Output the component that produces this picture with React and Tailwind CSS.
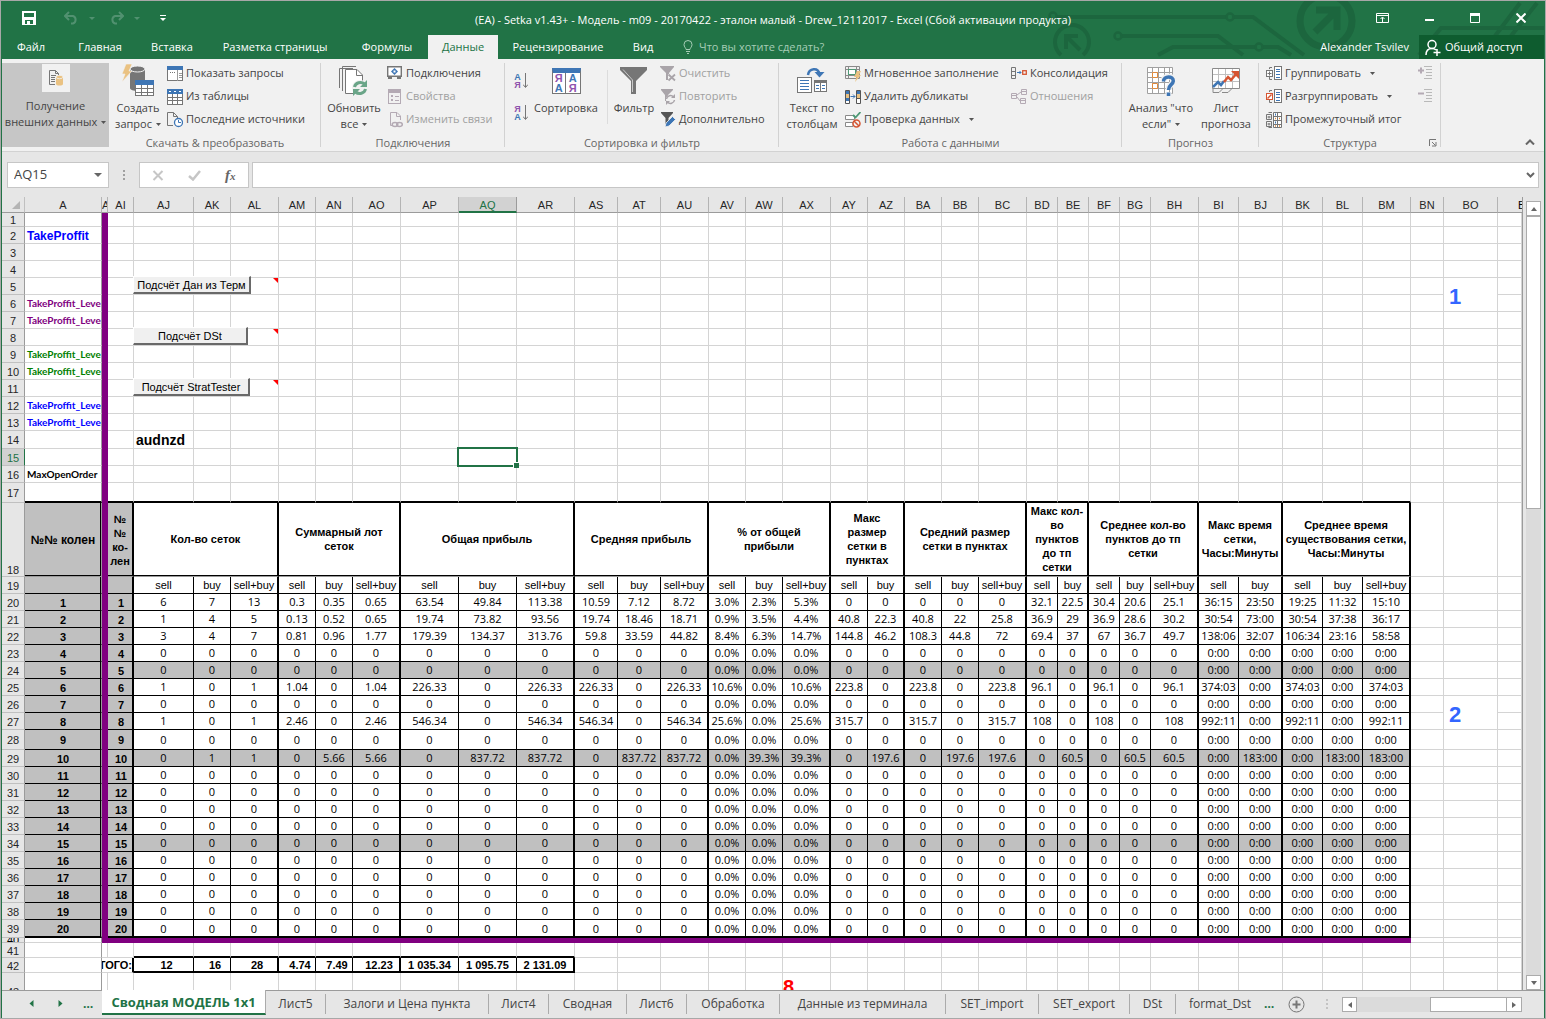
import React from "react";

/* ---------- sheet data ---------- */

const GROUPS = [
  { title: "Кол-во сеток", cols: [["AJ", 60], ["AK", 37], ["AL", 48]] },
  { title: "Суммарный лот\nсеток", cols: [["AM", 37], ["AN", 37], ["AO", 48]] },
  { title: "Общая прибыль", cols: [["AP", 58], ["AQ", 58], ["AR", 58]] },
  { title: "Средняя прибыль", cols: [["AS", 43], ["AT", 43], ["AU", 48]] },
  { title: "% от общей\nприбыли", cols: [["AV", 37], ["AW", 37], ["AX", 48]] },
  { title: "Макс\nразмер\nсетки в\nпунктах", cols: [["AY", 37], ["AZ", 37]] },
  { title: "Средний размер\nсетки в пунктах", cols: [["BA", 37], ["BB", 37], ["BC", 48]] },
  { title: "Макс кол-\nво\nпунктов\nдо тп\nсетки", cols: [["BD", 31], ["BE", 31]] },
  { title: "Среднее кол-во\nпунктов до тп\nсетки", cols: [["BF", 31], ["BG", 31], ["BH", 48]] },
  { title: "Макс время\nсетки,\nЧасы:Минуты", cols: [["BI", 40], ["BJ", 44]] },
  { title: "Среднее время\nсуществования сетки,\nЧасы:Минуты", cols: [["BK", 40], ["BL", 40], ["BM", 48]] },
];

const DATA_COLS = GROUPS.flatMap((g) =>
  g.cols.map(([name, width], i) => ({
    name,
    width,
    kind: ["sell", "buy", "sell+buy"][i],
    last: i === g.cols.length - 1,
  }))
);

const ZERO = [
  ..."000000000000".split(""),
  "0.0%", "0.0%", "0.0%",
  ..."0000000000".split(""),
  "0:00", "0:00", "0:00", "0:00", "0:00",
];

const VALUES = {
  1: "6 7 13 0.3 0.35 0.65 63.54 49.84 113.38 10.59 7.12 8.72 3.0% 2.3% 5.3% 0 0 0 0 0 32.1 22.5 30.4 20.6 25.1 36:15 23:50 19:25 11:32 15:10",
  2: "1 4 5 0.13 0.52 0.65 19.74 73.82 93.56 19.74 18.46 18.71 0.9% 3.5% 4.4% 40.8 22.3 40.8 22 25.8 36.9 29 36.9 28.6 30.2 30:54 73:00 30:54 37:38 36:17",
  3: "3 4 7 0.81 0.96 1.77 179.39 134.37 313.76 59.8 33.59 44.82 8.4% 6.3% 14.7% 144.8 46.2 108.3 44.8 72 69.4 37 67 36.7 49.7 138:06 32:07 106:34 23:16 58:58",
  6: "1 0 1 1.04 0 1.04 226.33 0 226.33 226.33 0 226.33 10.6% 0.0% 10.6% 223.8 0 223.8 0 223.8 96.1 0 96.1 0 96.1 374:03 0:00 374:03 0:00 374:03",
  8: "1 0 1 2.46 0 2.46 546.34 0 546.34 546.34 0 546.34 25.6% 0.0% 25.6% 315.7 0 315.7 0 315.7 108 0 108 0 108 992:11 0:00 992:11 0:00 992:11",
  10: "0 1 1 0 5.66 5.66 0 837.72 837.72 0 837.72 837.72 0.0% 39.3% 39.3% 0 197.6 0 197.6 197.6 0 60.5 0 60.5 60.5 0:00 183:00 0:00 183:00 183:00",
};

const TOTALS = ["12", "16", "28", "4.74", "7.49", "12.23", "1 035.34", "1 095.75", "2 131.09"];

const TOP_ROWS = [
  { n: 1, h: 14 },
  { n: 2, h: 17, label: "TakeProffit", tone: "pt-0.5 text-[#0000ff] text-xs leading-none" },
  { n: 3, h: 17 },
  { n: 4, h: 17 },
  { n: 5, h: 17, button: "Подсчёт Дан из Терм", size: "w-[118px]" },
  { n: 6, h: 17, label: "TakeProffit_Leve", tone: "text-[#800080] font-['Lato'] text-[10px]" },
  { n: 7, h: 17, label: "TakeProffit_Leve", tone: "text-[#800080] font-['Lato'] text-[10px]" },
  { n: 8, h: 17, button: "Подсчёт DSt", size: "w-[115px]" },
  { n: 9, h: 17, label: "TakeProffit_Leve", tone: "text-[#008000] font-['Lato'] text-[10px]" },
  { n: 10, h: 17, label: "TakeProffit_Leve", tone: "text-[#008000] font-['Lato'] text-[10px]" },
  { n: 11, h: 17, button: "Подсчёт StratTester", size: "w-[117px]" },
  { n: 12, h: 17, label: "TakeProffit_Leve", tone: "text-[#0000ff] font-['Lato'] text-[10px]" },
  { n: 13, h: 17, label: "TakeProffit_Leve", tone: "text-[#0000ff] font-['Lato'] text-[10px]" },
  { n: 14, h: 18 },
  { n: 15, h: 17 },
  { n: 16, h: 17, label: "MaxOpenOrder", tone: "text-black font-['Lato'] text-[10px]" },
  { n: 17, h: 20 },
];

const GRID = "border-r border-b border-[#d4d4d4]";

function RowHead({ n, tall }) {
  const active = n === 15;
  return (
    <th
      scope="row"
      className={
        "border-r border-b p-0 text-center text-[11px] font-normal " +
        (active
          ? "border-r-[#217346] border-b-[#c0c0c0] bg-[#d2d2d2] text-[#217346]"
          : "border-r-[#9b9b9b] border-b-[#c0c0c0] bg-[#e6e6e6] text-[#262626]") +
        (tall ? " align-bottom" : " pt-0.5 align-middle")
      }
    >
      {n}
    </th>
  );
}

function BigNumber({ value }) {
  return (
    <td rowSpan={2} className={GRID + " bg-white pl-[5px] align-bottom text-[22px] leading-7 font-bold text-[#3366ff]"}>
      {value}
    </td>
  );
}

function Trailing({ row }) {
  return (
    <>
      <td className={GRID} />
      {row === 5 && <BigNumber value="1" />}
      {row === 26 && <BigNumber value="2" />}
      {![5, 6, 26, 27].includes(row) && <td className={GRID} />}
      <td className={GRID} />
    </>
  );
}

function TopRow({ n, h, label, tone, button, size }) {
  const frame = n === 17;
  return (
    <tr style={{ height: h }}>
      <RowHead n={n} />
      <td
        className={
          "border-r border-r-[#9b9b9b] pl-0.5 font-bold whitespace-nowrap " +
          (frame ? "border-b-2 border-b-black " : "border-b border-b-[#d4d4d4] ") +
          (tone || "")
        }
      >
        {label}
      </td>
      <td className="bg-[#800080]" />
      <td className={frame ? "border-r border-b-2 border-r-[#d4d4d4] border-b-black" : GRID} />
      {DATA_COLS.map((c) => (
        <td
          key={c.name}
          className={
            "relative p-0 " +
            (frame ? "border-r border-b-2 border-r-[#d4d4d4] border-b-black" : GRID)
          }
        >
          {button && c.name === "AJ" && (
            <button
              type="button"
              className={
                "absolute bottom-0 -left-px z-10 h-[18px] border-t border-r-2 border-b-2 border-l border-t-white border-r-[#696969] border-b-[#696969] border-l-white bg-[#f0f0f0] pt-0.5 text-[11px] leading-none whitespace-nowrap text-black " +
                size
              }
            >
              {button}
            </button>
          )}
          {button && c.name === "AL" && (
            <svg className="absolute top-0 right-0 h-[5px] w-[5px]" viewBox="0 0 5 5">
              <path d="M0 0H5V5Z" fill="#ff0000" />
            </svg>
          )}
          {n === 14 && c.name === "AJ" && (
            <div className="pl-0.5 text-sm leading-none font-bold whitespace-nowrap">audnzd</div>
          )}
          {n === 15 && c.name === "AQ" && (
            <div className="absolute -inset-0.5 z-10 border-2 border-[#217346]">
              <div className="absolute -right-[3px] -bottom-[3px] h-[6px] w-[6px] border-t border-l border-white bg-[#217346]" />
            </div>
          )}
        </td>
      ))}
      <Trailing row={n} />
    </tr>
  );
}

const GREY_A =
  "border-r border-b border-r-[#9b9b9b] border-b-black bg-[#c0c0c0] p-0 pt-0.5 text-center text-[11px] font-bold shadow-[inset_-1px_0_0_#000]";
const GREY_AI = "border-r-2 border-b border-black bg-[#c0c0c0] p-0 pt-0.5 pl-0.5 text-center text-[11px] font-bold";

function DataRow({ i }) {
  const row = i + 19;
  const values = VALUES[i] ? VALUES[i].split(" ") : ZERO;
  const end = i === 20 ? " border-b-2" : "";
  const shade = i % 5 === 0 && i < 20 ? " bg-[#c0c0c0]" : " bg-white";
  return (
    <tr style={{ height: row === 28 ? 20 : row === 39 ? 18 : 17 }}>
      <RowHead n={row} />
      <td className={GREY_A + end}>{i}</td>
      <td className="bg-[#800080]" />
      <td className={GREY_AI + end}>{i}</td>
      {DATA_COLS.map((c, k) => (
        <td
          key={c.name}
          className={
            "border-b border-black text-center font-['Open_Sans'] text-[11px] leading-none whitespace-nowrap " +
            (row === 28 || row === 39 ? "" : "pb-0.5 ") +
            (c.last ? "border-r-2" : "border-r") +
            end +
            shade
          }
        >
          {values[k]}
        </td>
      ))}
      <Trailing row={row} />
    </tr>
  );
}

function Sheet() {
  const heads = [["A", 77], ["A", 6], ["AI", 26], ...DATA_COLS.map((c) => [c.name, c.width]), ["BN", 33], ["BO", 54]];
  return (
    <div className="min-w-0 flex-1 overflow-hidden border-r border-[#9b9b9b] bg-white font-['Liberation_Sans',sans-serif] text-black">
      <table className="w-full table-fixed border-separate border-spacing-0 leading-none">
        <colgroup>
          <col style={{ width: 23 }} />
          {heads.map(([name, w], k) => (
            <col key={name + k} style={{ width: w }} />
          ))}
          <col />
        </colgroup>
        <thead>
          <tr className="h-4">
            <td className="border-r border-b border-r-[#c0c0c0] border-b-[#9b9b9b] bg-[#e6e6e6] p-0">
              <svg className="mr-1 ml-auto h-[8px] w-[8px]" viewBox="0 0 8 8">
                <path d="M8 0V8H0Z" fill="#b4b4b4" />
              </svg>
            </td>
            {heads.map(([name], k) => (
              <th
                key={name + k}
                scope="col"
                className={
                  "overflow-hidden p-0 pt-0.5 text-center text-[11px] font-normal " +
                  (name === "AQ"
                    ? "border-r border-b-2 border-r-[#9b9b9b] border-b-[#217346] bg-[#d2d2d2] text-[#217346]"
                    : "border-r border-b border-r-[#b4b4b4] border-b-[#9b9b9b] bg-[#e6e6e6] text-[#262626]")
                }
              >
                {name}
              </th>
            ))}
            <th scope="col" className="border-b border-[#9b9b9b] bg-[#e6e6e6] p-0 pt-0.5 text-[11px] font-normal">
              <div className="ml-5 overflow-hidden text-left">B</div>
            </th>
          </tr>
        </thead>
        <tbody>
          {TOP_ROWS.map((r) => (
            <TopRow key={r.n} {...r} />
          ))}
          <tr className="h-[74px]">
            <RowHead n={18} tall />
            <td className="border-r border-b border-[#9b9b9b] bg-[#c0c0c0] p-0 text-center text-xs leading-none font-bold shadow-[inset_-1px_-1px_0_#000]">
              №№ колен
            </td>
            <td className="bg-[#800080]" />
            <td className="border-r-2 border-b border-r-black border-b-[#9b9b9b] bg-[#c0c0c0] p-0 text-center text-[11px] leading-[14px] font-bold shadow-[inset_0_-1px_0_#000]">
              №<br />№<br />ко-<br />лен
            </td>
            {GROUPS.map((g) => (
              <th
                key={g.title}
                scope="colgroup"
                colSpan={g.cols.length}
                className="border-r-2 border-b border-r-black border-b-[#9b9b9b] p-0 pb-0.5 text-center text-[11px] leading-[14px] font-bold whitespace-pre shadow-[inset_0_-1px_0_#000]"
              >
                {g.title}
              </th>
            ))}
            <Trailing row={18} />
          </tr>
          <tr className="h-[17px]">
            <RowHead n={19} />
            <td className={GREY_A} />
            <td className="bg-[#800080]" />
            <td className={GREY_AI} />
            {DATA_COLS.map((c) => (
              <td
                key={c.name}
                className={
                  "border-b border-black p-0 text-center text-[11px] whitespace-nowrap " +
                  (c.last ? "border-r-2" : "border-r")
                }
              >
                {c.kind}
              </td>
            ))}
            <Trailing row={19} />
          </tr>
          {Array.from({ length: 20 }, (_, k) => (
            <DataRow key={k} i={k + 1} />
          ))}
          <tr className="h-[5px]">
            <th scope="row" className="border-r border-b border-r-[#9b9b9b] border-b-[#c0c0c0] bg-[#e6e6e6] p-0 text-[11px] font-normal">
              <div className="flex h-1 items-center justify-center overflow-hidden">40</div>
            </th>
            <td className="border-r border-b border-r-[#9b9b9b] border-b-[#d4d4d4] p-0" />
            <td colSpan={32} className="bg-[#800080] p-0" />
            <td className={GRID + " p-0"} />
            <td className={GRID + " p-0"} />
            <td className={GRID + " p-0"} />
          </tr>
          <tr className="h-[15px]">
            <RowHead n={41} />
            <td className="border-r border-b border-r-[#9b9b9b] border-b-[#d4d4d4] p-0" />
            <td className={GRID + " p-0"} />
            <td className={GRID + " p-0"} />
            {DATA_COLS.map((c, k) => (
              <td
                key={c.name}
                className={k < 9 ? "border-r border-b-2 border-r-[#d4d4d4] border-b-black p-0" : GRID + " p-0"}
              />
            ))}
            <Trailing row={41} />
          </tr>
          <tr className="h-[15px]">
            <RowHead n={42} />
            <td className="border-r border-b border-r-[#9b9b9b] border-b-[#d4d4d4] p-0" />
            <td colSpan={2} className="border-r-2 border-b border-r-black border-b-[#d4d4d4] p-0">
              <div className="flex justify-end overflow-hidden text-[11px] font-bold">
                <span>ИТОГО:</span>
              </div>
            </td>
            {DATA_COLS.map((c, k) => (
              <td
                key={c.name}
                className={
                  "p-0 pt-0.5 text-center text-[11px] font-bold whitespace-nowrap " +
                  (k < 6 ? "pl-1.5 " : "") +
                  (k < 9 ? "border-b-2 border-black " + (c.last ? "border-r-2" : "border-r") : GRID)
                }
              >
                {TOTALS[k]}
              </td>
            ))}
            <Trailing row={42} />
          </tr>
          <tr className="h-10">
            <th scope="row" className="border-r border-[#9b9b9b] bg-[#e6e6e6] p-0 pt-3.5 align-top text-[11px] font-normal text-[#262626]">
              43
            </th>
            <td className="border-r border-r-[#9b9b9b] p-0" />
            <td className={GRID + " p-0"} />
            <td className={GRID + " p-0"} />
            {DATA_COLS.map((c) => (
              <td key={c.name} className={GRID + " p-0 align-top"}>
                {c.name === "AX" && (
                  <div className="pt-1 text-[20px] leading-5 font-bold text-[#ff0000]">8</div>
                )}
              </td>
            ))}
            <Trailing row={43} />
          </tr>
        </tbody>
      </table>
    </div>
  );
}

/* ---------- icons ---------- */

function Ico({ w = 16, h = 16, children, className = "" }) {
  return (
    <svg width={w} height={h} viewBox={`0 0 ${w} ${h}`} fill="none" className={"shrink-0 " + className} aria-hidden="true">
      {children}
    </svg>
  );
}

const Caret = ({ className = "" }) => (
  <svg width="5" height="3" viewBox="0 0 5 3" className={"inline-block shrink-0 " + className} aria-hidden="true">
    <path d="M0 0H5L2.500 3Z" fill="#555" />
  </svg>
);

const GetData = () => (
  <span className="flex h-7 w-7 items-center justify-center bg-[#f1f1f1]">
    <Ico>
      <path d="M1.500 .5H7.500L10.500 3.500V6M1.500 .5V14.500H7" stroke="#767676" fill="none" />
      <path d="M7.500 .5V3.500H10.500M3 5.500H8M3 7.500H7M3 9.500H7M3 11.500H7" stroke="#767676" />
      <path d="M8 7V14C8 16 15 16 15 14V7Z" fill="#eac282" />
      <ellipse cx="11.500" cy="7" rx="3.500" ry="1.700" fill="#eac282" stroke="#f1f1f1" strokeWidth=".8" />
    </Ico>
  </span>
);

const NewQuery = () => (
  <Ico w={34} h={34}>
    <path d="M9 4V24C9 28 24 28 24 24V4Z" fill="#767676" />
    <ellipse cx="16.500" cy="5" rx="7.500" ry="3" fill="#767676" stroke="#f1f1f1" />
    <path d="M5 0H11L8 7H11L1 18L4 10H1Z" fill="#eac282" stroke="#f1f1f1" strokeWidth=".6" />
    <rect x="14.500" y="17.500" width="18" height="14" fill="#fff" stroke="#767676" />
    <path d="M14 16H33V21H14Z" fill="#3e76b5" />
    <path d="M15 24.500H32M15 28.500H32M20.500 21V31M26.500 21V31" stroke="#767676" />
  </Ico>
);

const ShowQueries = () => (
  <Ico>
    <rect x=".5" y=".5" width="15" height="14" fill="#fff" stroke="#767676" />
    <path d="M0 0H16V4H0Z" fill="#3e76b5" />
    <path d="M3 6.500H9" stroke="#767676" strokeDasharray="1 1" />
    <path d="M10.500 4V15M12 7.500H15M12 9.500H15M12 11.500H15" stroke="#9a9a9a" />
  </Ico>
);

const FromTable = () => (
  <Ico>
    <rect x=".5" y="1.500" width="15" height="14" fill="#fff" stroke="#767676" />
    <path d="M0 0H16V5H0Z" fill="#3e76b5" />
    <path d="M2 2.500H4M7 2.500H9M12 2.500H14" stroke="#fff" />
    <path d="M1 8.500H15M1 11.500H15M5.500 5V15M10.500 5V15" stroke="#767676" />
  </Ico>
);

const Recent = () => (
  <Ico>
    <path d="M.5 .5H6.500L10.500 4.500V6M.5 .5V13.500H6M6.500 .5V4.500H10.500" stroke="#767676" />
    <circle cx="11.500" cy="10.500" r="4" fill="#fff" stroke="#3e76b5" strokeWidth="1.300" />
    <path d="M11.500 8V10.500H14" stroke="#3e76b5" />
  </Ico>
);

const Refresh = () => (
  <Ico w={32} h={32}>
    <path d="M15 2.500H1.500V22M18 .5H4.500V25" stroke="#767676" transform="translate(0 1)" />
    <path d="M7.500 4.500H19L24.500 10V28.500H7.500Z" fill="#fff" stroke="#767676" />
    <path d="M18.500 4.500V10.500H24.500" stroke="#767676" />
    <circle cx="22" cy="23" r="8" fill="#f1f1f1" />
    <path d="M16.500 22A6 5.500 0 0 1 26.500 19M27.500 24A6 5.500 0 0 1 17.500 27" stroke="#6aa588" strokeWidth="3" />
    <path d="M29 15V22H22ZM15 31V24H22Z" fill="#6aa588" />
  </Ico>
);

const Connections = () => (
  <Ico>
    <path d="M.7 .7H14.300V10.300H.7Z" fill="#fff" stroke="#767676" strokeWidth="1.400" />
    <path d="M7.500 2L11 5.500L7.500 9L4 5.500Z" fill="#3e76b5" />
    <path d="M6.500 5.500H8.500" stroke="#fff" strokeWidth="2" />
    <path d="M1 12H5M10 12H14" stroke="#767676" strokeWidth="2" />
  </Ico>
);

const Properties = () => (
  <Ico>
    <rect x="1.500" y=".5" width="12" height="14" stroke="#b4aab4" />
    <path d="M1 0H14V4H1Z" fill="#b4aab4" />
    <path d="M4 6H6V8H4ZM4 10H6V12H4Z" fill="#b4aab4" />
    <path d="M8 7.500H12M8 11.500H12" stroke="#b4aab4" />
  </Ico>
);

const EditLinks = () => (
  <Ico>
    <path d="M3.500 .5H10L13.500 4V8M3.500 .5V13.500H5M9.500 .5V4.500H13.500" stroke="#b4aab4" />
    <ellipse cx="8" cy="12.500" rx="2.800" ry="2" stroke="#b4aab4" strokeWidth="1.500" />
    <ellipse cx="12.500" cy="12.500" rx="2.800" ry="2" stroke="#b4aab4" strokeWidth="1.500" />
  </Ico>
);

const SortAz = ({ down }) => (
  <span className="flex h-[18px] items-center gap-0.5 font-['Liberation_Sans'] text-[9px] leading-[8px] font-bold">
    <span className="flex flex-col">
      <span className={down ? "text-[#3e76b5]" : "text-[#8f53ad]"}>{down ? "А" : "Я"}</span>
      <span className={down ? "text-[#8f53ad]" : "text-[#3e76b5]"}>{down ? "Я" : "А"}</span>
    </span>
    <Ico w={5} h={16}>
      <path d="M2.500 0V14M0 11.500L2.500 14.500L5 11.500" stroke="#767676" />
    </Ico>
  </span>
);

const SortBig = () => (
  <span className="grid h-[26px] w-[29px] grid-cols-2 border border-t-[5px] border-[#767676] border-t-[#3e76b5] bg-white text-center font-['Liberation_Sans'] text-[11px] leading-[10px] font-bold">
    <span className="flex flex-col justify-center border-r border-[#767676]">
      <span className="text-[#8f53ad]">Я</span>
      <span className="text-[#3e76b5]">А</span>
    </span>
    <span className="flex flex-col justify-center">
      <span className="text-[#3e76b5]">А</span>
      <span className="text-[#8f53ad]">Я</span>
    </span>
  </span>
);

const FilterBig = () => (
  <Ico w={28} h={28}>
    <path d="M0 0H27V3L16 14V27H11V14L0 3Z" fill="#767676" />
    <path d="M3 2.500L12.500 13V25" stroke="#c8c8c8" />
  </Ico>
);

const ClearFilter = () => (
  <Ico>
    <path d="M0 0H14V1L9 7V14H6V7L0 1Z" fill="#a9a4a9" />
    <rect x="8" y="8" width="8" height="8" fill="#f1f1f1" />
    <path d="M8.500 8.500L15 14.500M15 8.500L8.500 14.500" stroke="#a9a4a9" strokeWidth="1.800" />
  </Ico>
);

const Reapply = () => (
  <Ico>
    <path d="M1 0H13V1L8 6V12H5V6L1 1Z" fill="#a9a4a9" />
    <circle cx="11" cy="10.500" r="5" fill="#f1f1f1" />
    <path d="M6.500 10A4 4 0 0 1 13.500 8M14.500 11A4 4 0 0 1 7.500 13" stroke="#a9a4a9" strokeWidth="1.500" />
    <path d="M15 5V9H11ZM6 16V12H10Z" fill="#a9a4a9" />
  </Ico>
);

const Advanced = () => (
  <Ico>
    <path d="M1 0H13V1L8.500 6V12H5.500V6L1 1Z" fill="#555" />
    <path d="M5 15L6 11L12.500 4.500L15.500 7.500L9 14Z" fill="#3e76b5" stroke="#f1f1f1" strokeWidth=".8" />
  </Ico>
);

const TextToCols = () => (
  <Ico w={32} h={30}>
    <path d="M12 9C13 2 22 1 23.500 8" stroke="#3e76b5" strokeWidth="2.500" />
    <path d="M18.500 6H28.500L23.500 11.500Z" fill="#3e76b5" />
    <rect x="1.500" y="11.500" width="14" height="15" fill="#fff" stroke="#767676" />
    <path d="M4 14.500H13M4 17.500H13M4 20.500H13M4 23.500H13" stroke="#3e76b5" />
    <rect x="18.500" y="14.500" width="12" height="11" fill="#fff" stroke="#767676" />
    <path d="M18 14H31V17H18ZM24 17H25V26H24Z" fill="#767676" />
    <path d="M20 19.500H23M26 19.500H29M20 22.500H23M26 22.500H29" stroke="#3e76b5" />
  </Ico>
);

const FlashFill = () => (
  <Ico>
    <path d="M.5 .5H14.500V12.500H.5ZM.5 3.500H14M.5 9.500H14M3.500 .5V12M11.500 .5V12" stroke="#8a8a8a" />
    <rect x="3.500" y="3.500" width="7" height="5" fill="#fff" stroke="#4f9a76" />
    <path d="M12 5H16L14 9H16L10 16L11.500 11H9Z" fill="#eac282" />
  </Ico>
);

const RemoveDup = () => (
  <Ico>
    <path d="M.5 1.500H4.500V14.500H.5ZM11.500 1.500H15.500V14.500H11.500Z" fill="#fff" stroke="#555" />
    <path d="M1 2H4V5H1ZM1 9H4V12H1ZM12 2H15V5H12Z" fill="#3e76b5" />
    <path d="M1 5H4V9H1ZM12 5H15V9H12Z" fill="#eac282" />
    <path d="M5.500 7.500H10M8 5.500L10 7.500L8 9.500" stroke="#3e76b5" />
    <path d="M12 9.500H15" stroke="#555" />
  </Ico>
);

const Validate = () => (
  <Ico>
    <path d="M.5 3.500H9.500V7.500H.5ZM.5 10.500H8V14.500H.5Z" fill="#fff" stroke="#8a8a8a" />
    <path d="M8 3L10.500 5.500L15.500 0" stroke="#4f9a76" strokeWidth="1.800" />
    <circle cx="11.500" cy="11.500" r="3.500" fill="#f1f1f1" stroke="#d65532" strokeWidth="1.500" />
    <path d="M9 9L14 14" stroke="#d65532" strokeWidth="1.500" />
  </Ico>
);

const Consolidate = () => (
  <Ico>
    <path d="M.5 1.500H4.500V12.500H.5ZM.5 5.500H4.500M.5 9.500H4.500" stroke="#767676" />
    <path d="M6 6.500H10M8.500 5L10 6.500L8.500 8" stroke="#3e76b5" />
    <rect x="11.700" y="4.700" width="3.600" height="3.600" stroke="#d65532" strokeWidth="1.300" />
  </Ico>
);

const Relations = () => (
  <Ico>
    <path d="M.5 4.500H5.500V9.500H.5ZM10.500 .5H15.500V5.500H10.500ZM9.500 9.500H14.500V14.500H9.500Z" stroke="#b4aab4" />
    <path d="M6 6L10 3M6 8L9 12M10 2.500H16M9 11.500H15M0 6.500H5" stroke="#b4aab4" />
  </Ico>
);

const WhatIf = () => (
  <Ico w={30} h={32}>
    <path d="M1.500 2.500H26.500V28.500H1.500ZM6.500 2V28M12.500 2V28M18.500 2V28M23.500 2V28M1 7.500H26M1 12.500H26M1 17.500H26M1 23.500H26" stroke="#a0a0a0" fill="#fff" />
    <path d="M6.500 7.500H11.500V12.500H6.500ZM6.500 18.500H11.500V23.500H6.500Z" fill="#fff" stroke="#e08a3c" />
    <path d="M17.500 16C17.500 10 28 10 27.500 16C27 20 22.500 19.500 22.500 25M22.500 27V31" stroke="#f1f1f1" strokeWidth="6" />
    <path d="M17.500 16.500C17.500 10.500 27.500 10.500 27.300 16C27 20 22.500 19.500 22.500 25M22.500 27.500V31" stroke="#3e76b5" strokeWidth="3.500" />
  </Ico>
);

const Forecast = () => (
  <Ico w={30} h={32}>
    <path d="M1.500 3.500H28.500V23.500H1.500Z" fill="#fff" stroke="#8a8a8a" />
    <path d="M7.500 4V23M14.500 4V23M21.500 4V23M2 9.500H28M2 16.500H28" stroke="#c0c0c0" />
    <path d="M2 23.500V27.500H8L12 23.500M11 27.500H17L21 23.500" stroke="#8a8a8a" />
    <path d="M2 22L7 17L10 20L13 16" stroke="#3e76b5" strokeWidth="2.500" />
    <path d="M13 17L17 12L20 15L26 8" stroke="#d65532" strokeWidth="2.500" />
    <path d="M20 6H28V14Z" fill="#d65532" />
  </Ico>
);

const GroupIco = ({ un }) => (
  <Ico>
    <path d="M6 1.500H3.500V3M6 13.500H3.500V11" stroke="#767676" />
    <rect x=".5" y="4.500" width="6" height="6" fill="#fff" stroke={un ? "#d65532" : "#767676"} />
    {un ? (
      <path d="M1.500 9.500L5.500 5.500" stroke="#d65532" strokeWidth="1.500" />
    ) : (
      <path d="M3.500 5.500V9.500M1.500 7.500H5.500" stroke="#767676" />
    )}
    <rect x="8.500" y=".5" width="7" height="13" fill="#fff" stroke="#767676" />
    <path d="M10 3.500H14M10 5.500H14M10 8.500H14M10 11.500H14" stroke="#3e76b5" />
  </Ico>
);

const Subtotal = () => (
  <Ico>
    <path d="M6 .5H2.500M6 15.500H2.500" stroke="#767676" />
    <path d="M.5 2.500H5.500V7.500H.5ZM.5 9.500H5.500V14.500H.5ZM3 4V6.500M1.500 5H4.500M3 11V13.500M1.500 12H4.500" stroke="#767676" />
    <path d="M7.500 .5H15.500V15.500H7.500ZM11.500 .5V15M7.500 4.500H15M7.500 8.500H15M7.500 12.500H15" fill="#fff" stroke="#767676" />
    <path d="M9 2.500H10M9 10.500H10" stroke="#3e76b5" strokeWidth="2" />
    <path d="M9 6.500H10M13 6.500H14M9 14H10M13 14H14" stroke="#e08a3c" strokeWidth="1.500" />
  </Ico>
);

const Detail = ({ plus }) => (
  <Ico>
    <path d={plus ? "M0 4.500H6M3 1.500V7.500" : "M0 4.500H6"} stroke="#b4aab4" strokeWidth="2" />
    <path d="M6 .5H14M8 3.500H14M8 6.500H14M8 9.500H14M6 12.500H14" stroke="#b9b9b9" />
  </Ico>
);

/* ---------- title bar ---------- */

const HeaderArt = () => (
  <svg className="pointer-events-none absolute top-0 right-0 h-[58px] w-[543px]" viewBox="0 0 543 58" fill="none" aria-hidden="true">
    <g stroke="#1c663e">
      <g strokeWidth="4">
        <path d="M55 16H226M233 16H252L303 54" />
        <path d="M121 35H217L242 54" />
        <path d="M157 54L172 46H254M262 46H277L290 54" />
        <path d="M418 54L440 27H543" />
        <path d="M494 35L519 2M510 35L536 2" />
      </g>
      <g strokeWidth="2.500" fill="#217346">
        <circle cx="52" cy="15" r="3.500" />
        <circle cx="117" cy="35" r="3.500" />
        <circle cx="229" cy="16" r="3.500" />
        <circle cx="258" cy="46" r="3.500" />
      </g>
      <path d="M60 54A17 17 0 1 1 82 54" strokeWidth="4" />
      <path d="M65 48V35H77M66 36L79 49" strokeWidth="4" />
      <circle cx="325" cy="20" r="26" strokeWidth="7" fill="#217346" />
      <path d="M315 9H336V29M335 10L314 31" strokeWidth="7" />
    </g>
  </svg>
);

const TABS = [
  ["Файл", "w-[58px]"],
  ["Главная", "w-[80px]"],
  ["Вставка", "w-[64px]"],
  ["Разметка страницы", "w-[142px]"],
  ["Формулы", "w-[82px]"],
  ["Данные", "w-[70px]"],
  ["Рецензирование", "w-[120px]"],
  ["Вид", "w-[50px]"],
];

function Header() {
  return (
    <header className="relative flex h-[58px] shrink-0 flex-col overflow-hidden bg-[#217346] text-[11px] text-white">
      <HeaderArt />
      <div className="relative flex h-[34px] items-center">
        <div className="flex w-[190px] items-center pl-5">
          <button type="button" aria-label="Сохранить">
            <Ico w={14} h={14}>
              <path d="M0 0H14V14H0Z" fill="#fff" />
              <path d="M2 2H12V6H2ZM3 9H11V13H3Z" fill="#217346" />
              <path d="M5 10H8V14H5Z" fill="#fff" />
            </Ico>
          </button>
          <button type="button" aria-label="Отменить" className="ml-7 flex items-center gap-2.5">
            <Ico w={15} h={14}>
              <path d="M1 5H9A4 4 0 0 1 9 12.500H7M5 1L1 5L5 9" stroke="#519170" strokeWidth="2" />
            </Ico>
            <svg width="6" height="3"><path d="M0 0H6L3 3Z" fill="#519170" /></svg>
          </button>
          <button type="button" aria-label="Вернуть" className="ml-3.5 flex items-center gap-2.5">
            <Ico w={15} h={14}>
              <path d="M14 5H6A4 4 0 0 0 6 12.500H8M10 1L14 5L10 9" stroke="#519170" strokeWidth="2" />
            </Ico>
            <svg width="6" height="3"><path d="M0 0H6L3 3Z" fill="#519170" /></svg>
          </button>
          <button type="button" aria-label="Настройка панели" className="ml-5">
            <Ico w={6} h={6}>
              <path d="M0 .5H6" stroke="#fff" />
              <path d="M0 3H6L3 6Z" fill="#fff" />
            </Ico>
          </button>
        </div>
        <h1 className="flex-1 pt-1 text-center whitespace-nowrap">
          (EA) - Setka v1.43+ - Модель - m09 - 20170422 - эталон малый - Drew_12112017 - Excel (Сбой активации продукта)
        </h1>
        <div className="flex w-[190px] items-center justify-end gap-9 pr-[18px]">
          <button type="button" aria-label="Параметры ленты">
            <Ico w={13} h={10}>
              <path d="M.5 .5H12.500V9.500H.5ZM.5 2.500H12.500M6.500 9V4.500M4.500 6L6.500 4L8.500 6" stroke="#fff" />
            </Ico>
          </button>
          <button type="button" aria-label="Свернуть">
            <Ico w={9} h={10}><path d="M0 7H9" stroke="#fff" strokeWidth="2" /></Ico>
          </button>
          <button type="button" aria-label="Развернуть">
            <Ico w={10} h={10}>
              <path d="M.5 .5H9.500V9.500H.5Z" stroke="#fff" />
              <path d="M0 1.500H10" stroke="#fff" strokeWidth="3" />
            </Ico>
          </button>
          <button type="button" aria-label="Закрыть">
            <Ico w={10} h={10}><path d="M.5 .5L9.500 9.500M9.500 .5L.5 9.500" stroke="#fff" strokeWidth="2" /></Ico>
          </button>
        </div>
      </div>
      <div className="relative flex h-6 items-stretch">
        <nav className="flex">
          {TABS.map(([t, w]) => (
            <button
              key={t}
              type="button"
              className={
                w + " text-center whitespace-nowrap " + (t === "Данные" ? "bg-[#f1f1f1] text-[#217346]" : "text-white")
              }
            >
              {t}
            </button>
          ))}
        </nav>
        <label className="ml-[15px] flex items-center gap-1.5 text-[#a6cdb6]">
          <Ico w={10} h={14}>
            <path d="M3 9.500C3 8 1 7 1 4.500A4 4 0 0 1 9 4.500C9 7 7 8 7 9.500ZM3 11.500H7M4 13.500H6" stroke="#a6cdb6" />
          </Ico>
          <input
            type="text"
            aria-label="Помощник"
            placeholder="Что вы хотите сделать?"
            className="w-40 bg-transparent outline-none placeholder:text-[#a6cdb6]"
          />
        </label>
        <div className="flex-1" />
        <div className="flex items-center pr-2.5 whitespace-nowrap">Alexander Tsvilev</div>
        <button type="button" className="flex w-[125px] items-center gap-1 bg-[#0e5c2f] pl-1.5 whitespace-nowrap">
          <Ico w={16} h={17}>
            <circle cx="7" cy="5.500" r="4" stroke="#fff" strokeWidth="1.500" />
            <path d="M1 16C1 11 4 9.500 7 9.500C9 9.500 10 10 11 11M12 10V17M8.500 13.500H15.500" stroke="#fff" strokeWidth="1.500" />
          </Ico>
          Общий доступ
        </button>
      </div>
    </header>
  );
}

/* ---------- ribbon ---------- */

function Big({ icon, lines, caret, width }) {
  return (
    <button type="button" className={"flex shrink-0 flex-col items-center text-center leading-4 whitespace-nowrap " + width}>
      <span className="flex h-[38px] items-center justify-center">{icon}</span>
      {lines.map((l, i) => (
        <span key={l} className="flex items-center gap-1">
          {l}
          {caret && i === lines.length - 1 && <Caret />}
        </span>
      ))}
    </button>
  );
}

function Small({ icon, text, off, caret }) {
  return (
    <button
      type="button"
      disabled={off}
      className={"flex h-[23px] items-center gap-[3px] whitespace-nowrap " + (off ? "text-[#a0a0a0]" : "text-[#444]")}
    >
      <span className="flex w-4">{icon}</span>
      {text}
      {caret && <Caret className="ml-1.5" />}
    </button>
  );
}

function Group({ label, width, children, launcher }) {
  return (
    <section className={"relative flex shrink-0 flex-col " + width}>
      <div className="flex h-[73px]">{children}</div>
      <div className="flex h-4 items-center justify-center text-[#666]">{label}</div>
      {launcher && (
        <button type="button" aria-label="Параметры структуры" className="absolute right-1 bottom-1 flex">
          <Ico w={8} h={8}>
            <path d="M.5 7V.5H7M3 3L6.500 6.500M7 3V7H3" stroke="#767676" />
          </Ico>
        </button>
      )}
      <div className="absolute top-px right-0 h-[84px] w-px bg-[#d2d2d2]" />
    </section>
  );
}

function Ribbon() {
  return (
    <div className="flex h-[93px] shrink-0 border-b border-[#d2d2d2] bg-[#f1f1f1] pt-[3px] text-[11px] text-[#444]">
      <button type="button" className="mt-px flex h-[84px] w-[107px] shrink-0 flex-col items-center bg-[#c6c6c6] pt-px leading-4">
        <GetData />
        <span className="mt-1.5">Получение</span>
        <span className="flex items-center gap-1 whitespace-nowrap">
          внешних данных <Caret />
        </span>
      </button>
      <Group label="Скачать & преобразовать" width="w-[212px]">
        <Big icon={<NewQuery />} lines={["Создать", "запрос"]} caret width="w-[58px]" />
        <div className="flex flex-col">
          <Small icon={<ShowQueries />} text="Показать запросы" />
          <Small icon={<FromTable />} text="Из таблицы" />
          <Small icon={<Recent />} text="Последние источники" />
        </div>
      </Group>
      <Group label="Подключения" width="w-[184px]">
        <Big icon={<Refresh />} lines={["Обновить", "все"]} caret width="w-[66px]" />
        <div className="flex flex-col">
          <Small icon={<Connections />} text="Подключения" />
          <Small icon={<Properties />} text="Свойства" off />
          <Small icon={<EditLinks />} text="Изменить связи" off />
        </div>
      </Group>
      <Group label="Сортировка и фильтр" width="w-[274px]">
        <div className="flex w-7 flex-col items-center gap-3.5 pt-2.5 pl-1">
          <button type="button" aria-label="Сортировка от А до Я"><SortAz down /></button>
          <button type="button" aria-label="Сортировка от Я до А"><SortAz /></button>
        </div>
        <Big icon={<SortBig />} lines={["Сортировка"]} width="w-[66px]" />
        <div className="mt-2 ml-2 h-[54px] w-px bg-[#dcdcdc]" />
        <Big icon={<FilterBig />} lines={["Фильтр"]} width="w-[52px]" />
        <div className="flex flex-col">
          <Small icon={<ClearFilter />} text="Очистить" off />
          <Small icon={<Reapply />} text="Повторить" off />
          <Small icon={<Advanced />} text="Дополнительно" />
        </div>
      </Group>
      <Group label="Работа с данными" width="w-[343px]">
        <Big icon={<TextToCols />} lines={["Текст по", "столбцам"]} width="w-[66px]" />
        <div className="flex w-[166px] flex-col">
          <Small icon={<FlashFill />} text="Мгновенное заполнение" />
          <Small icon={<RemoveDup />} text="Удалить дубликаты" />
          <Small icon={<Validate />} text="Проверка данных" caret />
        </div>
        <div className="flex flex-col">
          <Small icon={<Consolidate />} text="Консолидация" />
          <Small icon={<Relations />} text="Отношения" off />
        </div>
      </Group>
      <Group label="Прогноз" width="w-[137px]">
        <Big icon={<WhatIf />} lines={['Анализ "что', 'если"']} caret width="w-[78px]" />
        <Big icon={<Forecast />} lines={["Лист", "прогноза"]} width="w-[52px]" />
      </Group>
      <Group label="Структура" width="w-[182px]" launcher>
        <div className="flex w-[159px] flex-col pl-[7px]">
          <Small icon={<GroupIco />} text="Группировать" caret />
          <Small icon={<GroupIco un />} text="Разгруппировать" caret />
          <Small icon={<Subtotal />} text="Промежуточный итог" />
        </div>
        <div className="flex flex-col">
          <button type="button" disabled aria-label="Показать детали" className="flex h-[23px] items-center"><Detail plus /></button>
          <button type="button" disabled aria-label="Скрыть детали" className="flex h-[23px] items-center"><Detail /></button>
        </div>
      </Group>
      <button type="button" aria-label="Свернуть ленту" className="mt-auto mr-[9px] mb-1.5 ml-auto">
        <Ico w={10} h={6}><path d="M1 5.500L5 1.500L9 5.500" stroke="#666" strokeWidth="2" /></Ico>
      </button>
    </div>
  );
}

function FormulaBar() {
  return (
    <div className="flex h-[45px] shrink-0 items-start bg-[#e6e6e6] pt-2.5 pr-[5px] pl-[5px] text-[#444]">
      <div className="flex h-[26px] w-[102px] items-center border border-[#c6c6c6] bg-white pr-1.5">
        <input aria-label="Имя ячейки" defaultValue="AQ15" className="min-w-0 flex-1 bg-transparent pl-1.5 text-[13px] outline-none" />
        <button type="button" aria-label="Список имён">
          <Ico w={8} h={4}><path d="M0 0H8L4 4Z" fill="#666" /></Ico>
        </button>
      </div>
      <Ico w={30} h={26}>
        <path d="M15 8V10M15 12V14M15 16V18" stroke="#a0a0a0" strokeWidth="2" />
      </Ico>
      <div className="mr-[3px] flex h-[26px] w-[110px] items-center gap-6 border border-[#c6c6c6] bg-white pl-3">
        <button type="button" aria-label="Отмена">
          <Ico w={12} h={11}><path d="M1.500 1L10.500 10M10.500 1L1.500 10" stroke="#c6c6c6" strokeWidth="2" /></Ico>
        </button>
        <button type="button" aria-label="Ввод">
          <Ico w={13} h={11}><path d="M1 6L5 9.500L12 1" stroke="#c6c6c6" strokeWidth="2.500" /></Ico>
        </button>
        <button type="button" aria-label="Вставить функцию" className="font-['Liberation_Serif',serif] text-[15px] leading-none font-bold text-[#666] italic">
          f<span className="text-[11px]">x</span>
        </button>
      </div>
      <div className="flex h-[26px] min-w-0 flex-1 items-center border border-[#c6c6c6] bg-white pr-[3px]">
        <input aria-label="Строка формул" className="min-w-0 flex-1 bg-transparent px-2 text-[13px] outline-none" />
        <button type="button" aria-label="Развернуть строку формул">
          <Ico w={9} h={6}><path d="M1 1L4.500 4.500L8 1" stroke="#666" strokeWidth="2" /></Ico>
        </button>
      </div>
    </div>
  );
}

const BOX = "flex items-center justify-center border border-[#ababab] bg-white";

function VScroll() {
  return (
    <div className="flex w-[21px] shrink-0 flex-col bg-[#e6e6e6] px-[3px] pt-1">
      <div className="flex flex-1 flex-col bg-[#dbdbdb]">
        <button type="button" aria-label="Вверх" className={BOX + " h-[15px]"}>
          <Ico w={6} h={4}><path d="M0 4H6L3 0Z" fill="#666" /></Ico>
        </button>
        <div className="h-[293px] border border-[#ababab] bg-white" />
        <div className="flex-1" />
        <button type="button" aria-label="Вниз" className={BOX + " h-[15px]"}>
          <Ico w={6} h={4}><path d="M0 0H6L3 4Z" fill="#666" /></Ico>
        </button>
      </div>
    </div>
  );
}

const SHEETS = [
  ["Лист5", "w-[60px]"],
  ["Залоги и Цена пункта", "w-[163px]"],
  ["Лист4", "w-[60px]"],
  ["Сводная", "w-[78px]"],
  ["Лист6", "w-[60px]"],
  ["Обработка", "w-[93px]"],
  ["Данные из терминала", "w-[166px]"],
  ["SET_import", "w-[93px]"],
  ["SET_export", "w-[91px]"],
  ["DSt", "w-[46px]"],
];

function SheetTabs() {
  return (
    <footer className="flex h-[28px] shrink-0 items-start border-t border-[#9b9b9b] bg-[#e6e6e6] text-xs text-[#444]">
      <div className="flex h-[26px] w-[100px] items-center pl-[27px]">
        <button type="button" aria-label="Предыдущий лист">
          <Ico w={5} h={8}><path d="M4.500 0V7L.5 3.500Z" fill="#217346" /></Ico>
        </button>
        <button type="button" aria-label="Следующий лист" className="ml-6">
          <Ico w={5} h={8}><path d="M.5 0V7L4.500 3.500Z" fill="#217346" /></Ico>
        </button>
        <button type="button" className="ml-5 font-bold text-[#217346]">…</button>
      </div>
      <button
        type="button"
        className="-mt-px h-[25px] w-[164px] border-r border-b-2 border-r-[#ababab] border-b-[#217346] bg-white pt-0.5 text-[13px] leading-none font-bold whitespace-nowrap text-[#217346]"
      >
        Сводная МОДЕЛЬ 1x1
      </button>
      {SHEETS.map(([name, w]) => (
        <button key={name} type="button" className={"mt-[3px] h-5 border-r border-[#ababab] whitespace-nowrap " + w}>
          {name}
        </button>
      ))}
      <button type="button" className="mt-[3px] h-5 w-[88px] whitespace-nowrap">format_Dst</button>
      <button type="button" className="mt-[3px] h-5 font-bold text-[#217346]">…</button>
      <button type="button" aria-label="Новый лист" className="mt-[5px] ml-3.5">
        <Ico w={17} h={17}>
          <circle cx="8.500" cy="8.500" r="7.500" stroke="#767676" />
          <path d="M8.500 4.500V12.500M4.500 8.500H12.500" stroke="#767676" strokeWidth="2" />
        </Ico>
      </button>
      <Ico w={30} h={24} className="ml-auto">
        <path d="M15 8V10M15 12V14M15 16V18" stroke="#a0a0a0" />
      </Ico>
      <div className="mt-1.5 mr-[22px] flex h-[15px] w-[180px] bg-[#dbdbdb]">
        <button type="button" aria-label="Влево" className={BOX + " w-[15px]"}>
          <Ico w={4} h={6}><path d="M4 0V6L0 3Z" fill="#666" /></Ico>
        </button>
        <div className="flex-1" />
        <div className="w-[77px] border border-[#ababab] bg-white" />
        <button type="button" aria-label="Вправо" className={BOX + " w-[15px] border-l-0"}>
          <Ico w={4} h={6}><path d="M0 0V6L4 3Z" fill="#666" /></Ico>
        </button>
      </div>
    </footer>
  );
}

export default function App() {
  return (
    <div className="h-screen bg-[#a8a8a8] p-px font-['Open_Sans','Noto_Sans',sans-serif]">
      <div className="flex h-full flex-col overflow-hidden border-x border-[#217346]">
        <Header />
        <Ribbon />
        <FormulaBar />
        <main className="flex min-h-0 flex-1">
          <Sheet />
          <VScroll />
        </main>
        <SheetTabs />
      </div>
    </div>
  );
}
